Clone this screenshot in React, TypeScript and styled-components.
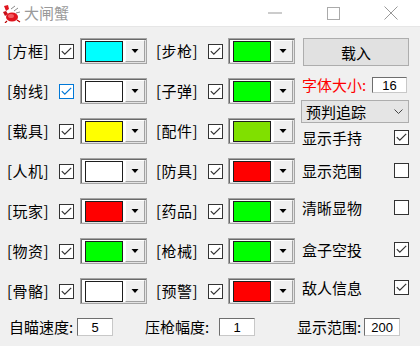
import React from 'react'
import styled, { createGlobalStyle } from 'styled-components'

const Global = createGlobalStyle`
  html, body { margin: 0; padding: 0; background: #f0f0f0; }
  body { font-family: "Noto Sans CJK SC", "Microsoft YaHei", sans-serif; }
`

const Window = styled.div`
  width: 420px;
  height: 346px;
  display: flex;
  flex-direction: column;
  background: #f0f0f0;
  overflow: hidden;
`

// ---- title bar ----
const TitleBar = styled.div`
  height: 27px;
  flex: none;
  box-sizing: border-box;
  background: #fff;
  border-bottom: 1px solid #e6e6e6;
  display: flex;
  align-items: center;
`

const Logo = styled.div`
  width: 20px;
  height: 20px;
  margin-left: 2px;
  display: flex;
`

const Title = styled.div`
  margin-left: 2px;
  font-size: 15px;
  line-height: 20px;
  color: #9a9a9a;
  flex: 1;
`

const CaptionButton = styled.div`
  width: 58px;
  height: 27px;
  display: flex;
  align-items: center;
  justify-content: center;
`

// ---- body ----
const Body = styled.div`
  display: flex;
  flex-direction: column;
  padding: 11px 0 0 7px;
`

const Main = styled.div`
  display: flex;
  align-items: flex-start;
`

const ColorGrid = styled.div`
  display: grid;
  grid-template-columns: 140px 140px;
  grid-auto-rows: 26px;
  column-gap: 9px;
  row-gap: 14px;
`

const Item = styled.div`
  display: flex;
  align-items: center;
`

const ItemLabel = styled.span`
  width: 52px;
  font-size: 15px;
  line-height: 20px;
  color: #000;
  letter-spacing: 0.5px;
  white-space: nowrap;
`

const Box = styled.span<{ $focus?: boolean }>`
  width: 15px;
  height: 15px;
  flex: none;
  box-sizing: border-box;
  border: 1px solid ${p => (p.$focus ? '#0078d7' : '#333')};
  background: #fff;
  display: flex;
  align-items: center;
  justify-content: center;
`

const Combo = styled.div<{ $gap: number }>`
  margin-left: ${p => p.$gap}px;
  width: 67px;
  height: 26px;
  box-sizing: border-box;
  border: 1px solid #a5a5a5;
  box-shadow: inset 1px 1px 0 #6a6a6a, inset -1px -1px 0 #e3e3e3;
  background: #fff;
  display: flex;
  align-items: center;
  padding: 1px 1px 1px 4px;
`

const Swatch = styled.div<{ $color: string }>`
  width: 38px;
  height: 21px;
  box-sizing: border-box;
  border: 1px solid #1e1e1e;
  background: ${p => p.$color};
`

const DropButton = styled.div`
  margin-left: auto;
  width: 20px;
  height: 22px;
  box-sizing: border-box;
  background: #f0f0f0;
  border-top: 1px solid #fff;
  border-left: 1px solid #fff;
  border-right: 1px solid #a0a0a0;
  border-bottom: 1px solid #a0a0a0;
  display: flex;
  align-items: center;
  justify-content: center;
`

// ---- right panel ----
const Side = styled.div`
  margin-left: 5px;
  width: 108px;
  display: flex;
  flex-direction: column;
`

const LoadButton = styled.div`
  margin-left: 2px;
  height: 28px;
  box-sizing: border-box;
  background: #e1e1e1;
  border: 1px solid #adadad;
  display: flex;
  align-items: center;
  justify-content: center;
  font-size: 15px;
  color: #000;
`

const FontRow = styled.div`
  margin-top: 11px;
  height: 16px;
  display: flex;
  align-items: center;
  justify-content: space-between;
  padding: 0 2px 0 1px;
`

const RedLabel = styled.span`
  font-size: 15px;
  line-height: 16px;
  color: #ff0000;
`

const NumBox = styled.div<{ $w: number; $h: number; $gap?: number }>`
  width: ${p => p.$w}px;
  height: ${p => p.$h}px;
  margin-left: ${p => p.$gap ?? 0}px;
  box-sizing: border-box;
  background: #fff;
  border-top: 1px solid #6e6e6e;
  border-left: 1px solid #6e6e6e;
  border-right: 1px solid #c8c8c8;
  border-bottom: 1px solid #c8c8c8;
  font-family: "Liberation Sans", Arial, sans-serif;
  font-size: 13px;
  color: #000;
  display: flex;
  align-items: center;
  justify-content: center;
`

const Select = styled.div`
  margin-top: 7px;
  height: 23px;
  box-sizing: border-box;
  background: #e5e5e5;
  border: 1px solid #adadad;
  display: flex;
  align-items: center;
  justify-content: space-between;
  padding: 0 5px 0 4px;
  font-size: 15px;
  color: #000;
`

const Toggle = styled.div<{ $top: number }>`
  margin-top: ${p => p.$top}px;
  height: 15px;
  display: flex;
  align-items: center;
  justify-content: space-between;
  padding-left: 1px;
  font-size: 15px;
  color: #000;
`

// ---- bottom row ----
const Bottom = styled.div`
  margin-top: 14px;
  height: 18px;
  display: flex;
  align-items: center;
  padding-left: 2px;
`

const Field = styled.div<{ $w: number }>`
  width: ${p => p.$w}px;
  display: flex;
  align-items: center;
`

const FieldLabel = styled.span`
  font-size: 15px;
  line-height: 18px;
  color: #000;
  white-space: nowrap;
`

const Check = ({ color }: { color: string }) => (
  <svg width="11" height="9" viewBox="0 0 11 9">
    <polyline points="0.8,4.2 3.8,7.2 10.2,0.8" fill="none" stroke={color} strokeWidth="1.2" />
  </svg>
)

const CheckBox = ({ checked = true, focus = false }: { checked?: boolean; focus?: boolean }) => (
  <Box $focus={focus}>{checked && <Check color={focus ? '#0078d7' : '#333'} />}</Box>
)

const Arrow = () => (
  <svg width="8" height="4" viewBox="0 0 8 4">
    <polygon points="0.5,0 7.5,0 4,4" fill="#000" />
  </svg>
)

const CrabLogo = () => (
  <svg width="20" height="20" viewBox="0 0 20 20">
    <path d="M9 6 L13 3 M12 8 L16 5 M14 10 L18 9" stroke="#8a8a8a" strokeWidth="1" fill="none" />
    <path d="M2 3 L6 2 L7 6 L4 8 Z" fill="#e0141e" />
    <path d="M1 9 L4 8 L6 11 L3 13 Z" fill="#c8101a" />
    <ellipse cx="10" cy="14" rx="6" ry="4.5" fill="#e0141e" />
    <ellipse cx="9" cy="13" rx="3" ry="2" fill="#f25a60" />
    <path d="M5 18 L3 20 M15 17 L18 19" stroke="#b00" strokeWidth="1.2" />
  </svg>
)

type Entry = { label: string; color: string; focus?: boolean }

// rows read left to right, two entries per row
const entries: Entry[] = [
  { label: '[方框]', color: '#00ffff' },
  { label: '[步枪]', color: '#00ff00' },
  { label: '[射线]', color: '#ffffff', focus: true },
  { label: '[子弹]', color: '#00ff00' },
  { label: '[载具]', color: '#ffff00' },
  { label: '[配件]', color: '#80e000' },
  { label: '[人机]', color: '#ffffff' },
  { label: '[防具]', color: '#ff0000' },
  { label: '[玩家]', color: '#ff0000' },
  { label: '[药品]', color: '#00ff00' },
  { label: '[物资]', color: '#00ff00' },
  { label: '[枪械]', color: '#00ff00' },
  { label: '[骨骼]', color: '#ffffff' },
  { label: '[预警]', color: '#ff0000' },
]

const toggles = [
  { label: '显示手持', checked: true, top: 7 },
  { label: '显示范围', checked: false, top: 18 },
  { label: '清晰显物', checked: false, top: 22 },
  { label: '盒子空投', checked: true, top: 27 },
  { label: '敌人信息', checked: true, top: 23 },
]

export default function App() {
  return (
    <Window>
      <Global />
      <TitleBar>
        <Logo><CrabLogo /></Logo>
        <Title>大闸蟹</Title>
        <CaptionButton>
          <svg width="14" height="2" viewBox="0 0 14 2"><line x1="0" y1="1" x2="14" y2="1" stroke="#999" strokeWidth="1" /></svg>
        </CaptionButton>
        <CaptionButton>
          <svg width="13" height="13" viewBox="0 0 13 13"><rect x="0.5" y="0.5" width="12" height="12" fill="none" stroke="#aaa" /></svg>
        </CaptionButton>
        <CaptionButton>
          <svg width="14" height="14" viewBox="0 0 14 14"><path d="M0.5 0.5 L13.5 13.5 M13.5 0.5 L0.5 13.5" stroke="#999" strokeWidth="1" /></svg>
        </CaptionButton>
      </TitleBar>
      <Body>
        <Main>
          <ColorGrid>
            {entries.map((e, i) => (
              <Item key={i}>
                <ItemLabel>{e.label}</ItemLabel>
                <CheckBox focus={e.focus} />
                <Combo $gap={i % 2 === 0 ? 6 : 5}>
                  <Swatch $color={e.color} />
                  <DropButton><Arrow /></DropButton>
                </Combo>
              </Item>
            ))}
          </ColorGrid>
          <Side>
            <LoadButton>载入</LoadButton>
            <FontRow>
              <RedLabel>字体大小:</RedLabel>
              <NumBox $w={35} $h={16}>16</NumBox>
            </FontRow>
            <Select>
              <span>预判追踪</span>
              <svg width="9" height="5" viewBox="0 0 9 5"><polyline points="0.5,0.5 4.5,4.5 8.5,0.5" fill="none" stroke="#444" strokeWidth="1" /></svg>
            </Select>
            {toggles.map(t => (
              <Toggle key={t.label} $top={t.top}>
                <span>{t.label}</span>
                <CheckBox checked={t.checked} />
              </Toggle>
            ))}
          </Side>
        </Main>
        <Bottom>
          <Field $w={136}>
            <FieldLabel>自瞄速度:</FieldLabel>
            <NumBox $w={36} $h={18} $gap={4}>5</NumBox>
          </Field>
          <Field $w={152}>
            <FieldLabel>压枪幅度:</FieldLabel>
            <NumBox $w={36} $h={18} $gap={10}>1</NumBox>
          </Field>
          <Field $w={110}>
            <FieldLabel>显示范围:</FieldLabel>
            <NumBox $w={36} $h={18} $gap={3}>200</NumBox>
          </Field>
        </Bottom>
      </Body>
    </Window>
  )
}
